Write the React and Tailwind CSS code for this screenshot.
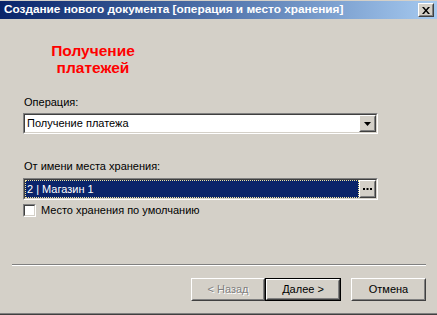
import React from "react";

const font = { fontFamily: '"Liberation Sans", Arial, sans-serif' };

function Raised({ className = "", children }) {
  return (
    <div className={"border border-t-white border-l-white border-r-[#404040] border-b-[#404040] bg-[#d4d0c8] " + className}>
      <div className="w-full h-full border border-t-[#d4d0c8] border-l-[#d4d0c8] border-r-[#808080] border-b-[#808080] flex items-center justify-center">
        {children}
      </div>
    </div>
  );
}

function Sunken({ className = "", children }) {
  return (
    <div className={"border border-t-[#808080] border-l-[#808080] border-r-white border-b-white " + className}>
      <div className="w-full h-full border border-t-[#404040] border-l-[#404040] border-r-[#d4d0c8] border-b-[#d4d0c8] flex items-center">
        {children}
      </div>
    </div>
  );
}

export default function App() {
  return (
    <div className="w-[437px] h-[315px] bg-[#d4d0c8] flex flex-col text-[11px] text-black overflow-hidden" style={font}>
      {/* title bar */}
      <div className="mt-px h-[18px] flex items-center pl-[4px] pr-[3px] bg-gradient-to-r from-[#0a246a] to-[#a6caf0]">
        <span className="text-white font-bold text-[11.8px] leading-none flex-1 whitespace-nowrap">
          Создание нового документа [операция и место хранения]
        </span>
        <Raised className="w-[16px] h-[14px]">
          <svg width="8" height="7" viewBox="0 0 8 7">
            <path d="M0 0h2l2 2.5L6 0h2L5 3.5 8 7H6L4 4.5 2 7H0l3-3.5z" fill="#000" />
          </svg>
        </Raised>
      </div>

      {/* heading */}
      <div className="w-[186px] mt-[23px] text-center text-[#ff0000] font-bold text-[15.5px] leading-[17px]">
        Получение<br />платежей
      </div>

      <div className="ml-[24px] mt-[20px] leading-[13px]">Операция:</div>

      <Sunken className="ml-[23px] mt-[4px] w-[355px] h-[21px] bg-white">
        <span className="flex-1 pl-[2px] leading-none">Получение платежа</span>
        <Raised className="w-[17px] h-[17px]">
          <svg width="7" height="4" viewBox="0 0 7 4">
            <path d="M0 0h7L3.5 4z" fill="#000" />
          </svg>
        </Raised>
      </Sunken>

      <div className="ml-[24px] mt-[26px] leading-[13px]">От имени места хранения:</div>

      <Sunken className="ml-[23px] mt-[5px] w-[355px] h-[22px]">
        <div className="flex-1 h-full bg-[#0a246a] border border-dotted border-[#f0e6a0] flex items-center">
          <span className="pl-[1px] text-white leading-none">2 | Магазин 1</span>
        </div>
        <Raised className="w-[17px] h-[18px]">
          <svg width="9" height="3" viewBox="0 0 9 3">
            <rect x="0" y="0" width="2" height="2" fill="#000" />
            <rect x="3.5" y="0" width="2" height="2" fill="#000" />
            <rect x="7" y="0" width="2" height="2" fill="#000" />
          </svg>
        </Raised>
      </Sunken>

      <div className="ml-[23px] mt-[4px] flex items-center">
        <Sunken className="w-[13px] h-[13px] bg-white" />
        <span className="ml-[5px] leading-[13px]">Место хранения по умолчанию</span>
      </div>

      {/* separator */}
      <div className="ml-[12px] mt-[47px] w-[414px] border-t border-t-[#808080] border-b border-b-white" />

      {/* buttons */}
      <div className="mt-[12px] flex pl-[191px]">
        <Raised className="w-[74px] h-[23px]">
          <span className="text-[#808080] leading-none" style={{ textShadow: "1px 1px 0 #fff" }}>&lt; Назад</span>
        </Raised>
        <div className="w-[76px] h-[23px] border border-black">
          <Raised className="w-full h-full">
            <span className="leading-none">Далее &gt;</span>
          </Raised>
        </div>
        <Raised className="ml-[10px] w-[75px] h-[23px]">
          <span className="leading-none">Отмена</span>
        </Raised>
      </div>

      <div className="mt-auto h-[2px] border-t border-t-[#808080] border-b border-b-[#404040]" />
    </div>
  );
}
